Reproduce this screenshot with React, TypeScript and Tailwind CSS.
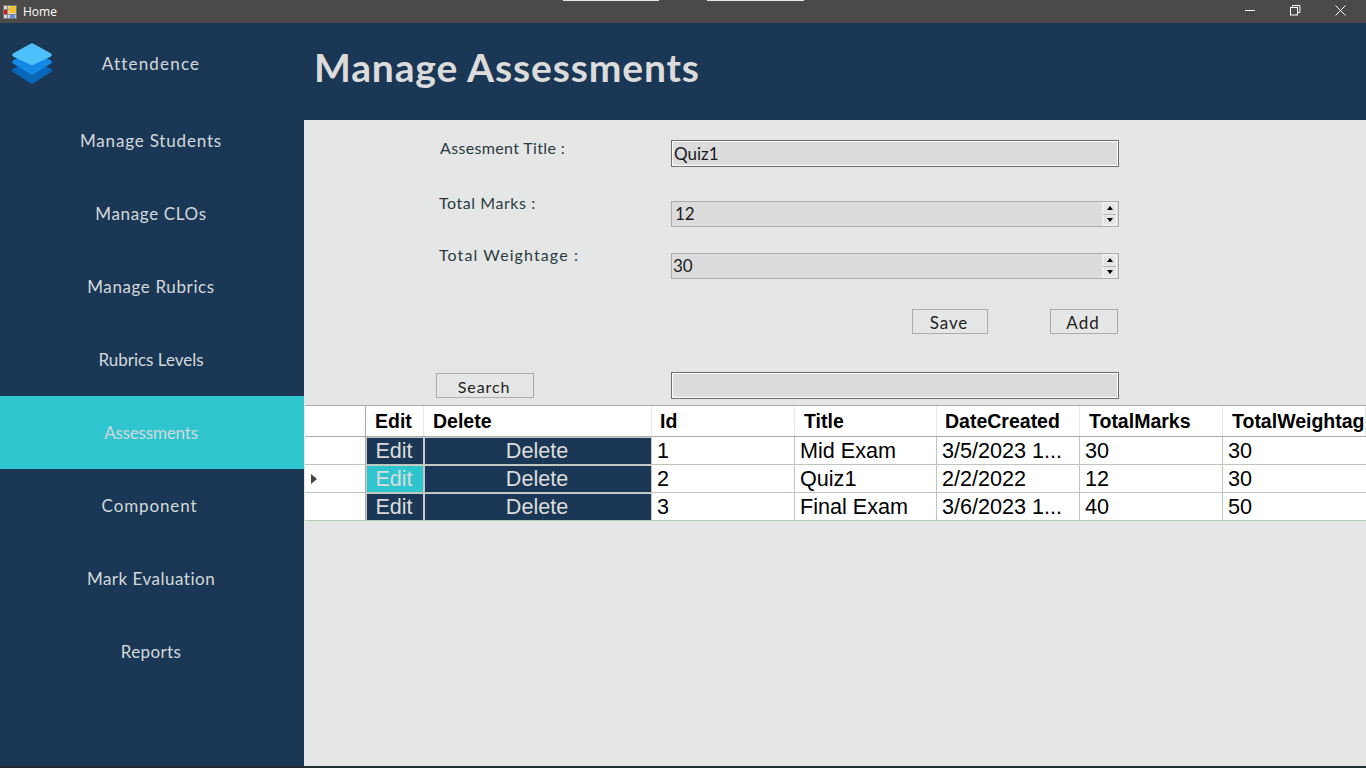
import React from "react";

const gothic = "font-['Lato','Open_Sans',sans-serif]";
const arial = "font-['Liberation_Sans',Arial,sans-serif]";

const nav = [
  { n: "Manage Students", t: "tracking-[0.82px]" },
  { n: "Manage CLOs", t: "tracking-[0.64px]" },
  { n: "Manage Rubrics", t: "tracking-[0.62px]" },
  { n: "Rubrics Levels", t: "tracking-[0px]" },
  { n: "Assessments", t: "tracking-[-0.18px]" },
  { n: "Component", t: "tracking-[0.88px] pr-[5px]" },
  { n: "Mark Evaluation", t: "tracking-[0.5px]" },
  { n: "Reports", t: "tracking-[0.4px]" },
];

const cols = [
  { h: "", w: "w-[61px]", p: "pl-[8px]" },
  { h: "Edit", w: "w-[58px]", p: "pl-[9px]" },
  { h: "Delete", w: "w-[228px]", p: "pl-[9px]" },
  { h: "Id", w: "w-[143px]", p: "pl-[8px]" },
  { h: "Title", w: "w-[142px]", p: "pl-[9px]" },
  { h: "DateCreated", w: "w-[143px]", p: "pl-[8px]" },
  { h: "TotalMarks", w: "w-[143px]", p: "pl-[9px]" },
  { h: "TotalWeightage", w: "flex-1 min-w-0", p: "pl-[9px]" },
];

const rows = [
  ["1", "Mid Exam", "3/5/2023 1...", "30", "30"],
  ["2", "Quiz1", "2/2/2022", "12", "30"],
  ["3", "Final Exam", "3/6/2023 1...", "40", "50"],
];

function Spinner() {
  return (
    <div className="flex flex-col gap-px w-[15px] h-[24px] bg-[#b0b0b0] border border-[#f0f0f0] mr-px">
      <div className="flex-1 bg-[#e4e4e4] border border-[#ececec] flex items-center justify-center">
        <div className="w-0 h-0 border-x-[3px] border-x-transparent border-b-[4px] border-b-black" />
      </div>
      <div className="flex-1 bg-[#e4e4e4] border border-[#ececec] flex items-center justify-center">
        <div className="w-0 h-0 border-x-[3px] border-x-transparent border-t-[4px] border-t-black" />
      </div>
    </div>
  );
}

function FormRow({ label, value, spin, h, mt, labelClass, valueClass, inset }: { label: string; value: string; spin?: boolean; h: string; mt: string; labelClass: string; valueClass: string; inset?: boolean }) {
  return (
    <div className={`flex ${mt} ${h}`}>
      <div className={`w-[232px] ${labelClass} text-[16px] leading-[20px] text-[#2c3a40]`}>{label}</div>
      <div className={`w-[448px] flex items-center justify-between bg-[#dcdcdc] border ${inset ? "border-[#6e6e6e] shadow-[inset_0_0_0_1px_#ffffff]" : "border-[#adadad]"}`}>
        <span className={`text-[17px] text-[#1a1a1a] ${valueClass}`}>{value}</span>
        {spin && <Spinner />}
      </div>
    </div>
  );
}

export default function App() {
  return (
    <div className={`w-[1366px] h-[768px] overflow-hidden flex flex-col bg-[#222a30] ${gothic}`}>
      <div className="h-[23px] bg-[#4c4a48] flex items-center relative shrink-0">
        <svg className="ml-[3px]" width="14" height="14" viewBox="0 0 14 14">
          <rect x="0.5" y="0.5" width="13" height="13" fill="#d8d8d8" stroke="#777" />
          <path d="M0.5 4.5H6M0.5 9.5H13M4.5 0.5V13.5M8.5 9.5V13.5" stroke="#888" strokeWidth="1" />
          <rect x="1" y="5" width="3" height="4" fill="#d01818" />
          <rect x="6" y="1" width="7" height="7" fill="#f4c430" />
          <rect x="7" y="10" width="5" height="3" fill="#5b8fe0" />
        </svg>
        <span className="ml-[6px] text-white text-[12px] font-['Open_Sans',sans-serif]">Home</span>
        <div className="absolute top-0 left-[563px] w-[96px] h-px bg-[#e8e8e8]" />
        <div className="absolute top-0 left-[707px] w-[97px] h-px bg-[#e8e8e8]" />
        <svg className="absolute top-[4px] left-[1240px]" width="20" height="14" viewBox="0 0 20 14" fill="none" stroke="white" strokeWidth="1">
          <path d="M5 6.5H15" />
        </svg>
        <svg className="absolute top-[5px] right-[65px]" width="11" height="11" viewBox="0 0 11 11" fill="none" stroke="white" strokeWidth="1">
          <rect x="0.5" y="2.5" width="7" height="7.5" />
          <path d="M2.5 2.5V0.5H9.9V7.5H7.5" />
        </svg>
        <svg className="absolute top-[5px] right-[20px]" width="11" height="11" viewBox="0 0 11 11" fill="none" stroke="white" strokeWidth="1">
          <path d="M0.5 0.5L10.5 10.5M10.5 0.5L0.5 10.5" />
        </svg>
      </div>

      <div className="flex h-[743px] shrink-0">
        <aside className="w-[304px] bg-[#1a3855] flex flex-col shrink-0">
          <div className="h-[81px] relative flex items-center justify-center pr-[2px] shrink-0">
            <svg className="absolute left-[12px] top-[20px]" width="40" height="42" viewBox="0 0 40 42">
              <path d="M20 16 L39 26 Q40.5 27.5 39 29 L22 40 Q20 41 18 40 L1 29 Q-0.5 27.5 1 26 Z" fill="#0a66b8" />
              <path d="M20 8 L39 17.5 Q40.5 19 39 20.5 L22 31 Q20 32 18 31 L1 20.5 Q-0.5 19 1 17.5 Z" fill="#1289e4" />
              <path d="M18.5 0.7 Q20 0 21.5 0.7 L39 10.5 Q40.5 12 39 13.5 L22 21.5 Q20 22.5 18 21.5 L1 13.5 Q-0.5 12 1 10.5 Z" fill="#4cc0fa" />
            </svg>
            <span className="text-[#d4d8db] text-[17px] tracking-[1.2px]">Attendence</span>
          </div>
          {nav.map(({ n, t }) => (
            <div key={n} className={`h-[73px] shrink-0 flex items-center justify-center pr-[2px] text-[#d4d8db] text-[17px] ${t} ${n === "Assessments" ? "bg-[#2fc5cf]" : ""}`}>
              {n}
            </div>
          ))}
        </aside>

        <main className="flex-1 min-w-0 bg-[#e5e7e6] flex flex-col">
          <div className="h-[97px] bg-[#1a3855] shrink-0 flex items-center pl-[10px] pb-[9px]">
            <h1 className="text-[39px] font-bold text-[#dcdcdc] tracking-[0.85px]">Manage Assessments</h1>
          </div>

          <div className="pl-[135px] flex flex-col">
            <FormRow label="Assesment Title :" value="Quiz1" h="h-[27px]" mt="mt-[20px]" labelClass="pl-px -mt-[2px] tracking-[0.35px]" valueClass="pl-[2px]" inset />
            <FormRow label="Total Marks :" value="12" spin h="h-[26px]" mt="mt-[34px]" labelClass="-mt-[8px] tracking-[0.55px]" valueClass="pl-[3px]" />
            <FormRow label="Total Weightage :" value="30" spin h="h-[26px]" mt="mt-[26px]" labelClass="-mt-[8px] tracking-[1.1px]" valueClass="pl-[1px]" />
            <div className="flex mt-[30px] h-[25px] text-[17px] text-[#222]">
              <div className="ml-[473px] w-[76px] border border-[#adadad] flex items-center justify-center tracking-[0.9px] pt-[2px] pr-[2px]">Save</div>
              <div className="ml-[62px] w-[68px] border border-[#adadad] flex items-center justify-center tracking-[1px] pt-[2px] pr-[2px]">Add</div>
            </div>
            <div className="flex mt-[38px] h-[27px] items-stretch">
              <div className="w-[232px]">
                <div className="mt-px -ml-[3px] w-[98px] h-[25px] border border-[#adadad] flex items-center justify-center text-[16px] text-[#222] tracking-[0.9px] pt-[2px] pr-[2px]">Search</div>
              </div>
              <div className="w-[448px] bg-[#dcdcdc] border border-[#6e6e6e] shadow-[inset_0_0_0_1px_#ffffff]" />
            </div>
          </div>

          <div className={`mt-[6px] ml-px border-t border-[#a9a9a9] bg-white ${arial} text-[21.6px] text-black`}>
            <div className="flex h-[31px] border-b border-[#a9a9a9] font-bold text-[19.5px]">
              {cols.map((c, i) => (
                <div key={i} className={`${c.w} ${c.p} pt-[2px] ${i === 0 ? "border-r border-r-[#a9a9a9]" : "border-r border-r-[#e8e8e8]"} overflow-hidden whitespace-nowrap flex items-center`}>
                  {c.h === "TotalWeightage" ? <span className="w-[133px] overflow-hidden block">{c.h}</span> : c.h}
                </div>
              ))}
            </div>
            {rows.map((r, ri) => (
              <div key={r[0]} className="flex h-[28px] border-b border-[#bcc8bc]">
                <div className="w-[61px] border-r border-r-[#a9a9a9] flex items-center pl-[6px]">
                  {ri === 1 && <div className="w-0 h-0 border-y-[5px] border-y-transparent border-l-[6px] border-l-[#444]" />}
                </div>
                <div className={`w-[58px] border border-b-0 border-[#c8c8c8] flex items-center justify-center pr-[2px] pt-[1px] text-[#dcdcdc] ${ri === 1 ? "bg-[#2fc5cf]" : "bg-[#1a3855]"}`}>Edit</div>
                <div className="w-[228px] border border-b-0 border-[#c8c8c8] bg-[#1a3855] flex items-center justify-center pr-[2px] pt-[1px] text-[#dcdcdc]">Delete</div>
                {r.map((v, i) => (
                  <div key={i} className={`${cols[i + 3].w} flex items-center pl-[5px] pt-[2px] whitespace-nowrap ${i < 4 ? "border-r border-r-[#bcc8bc]" : ""}`}>{v}</div>
                ))}
              </div>
            ))}
          </div>
        </main>
      </div>
    </div>
  );
}
